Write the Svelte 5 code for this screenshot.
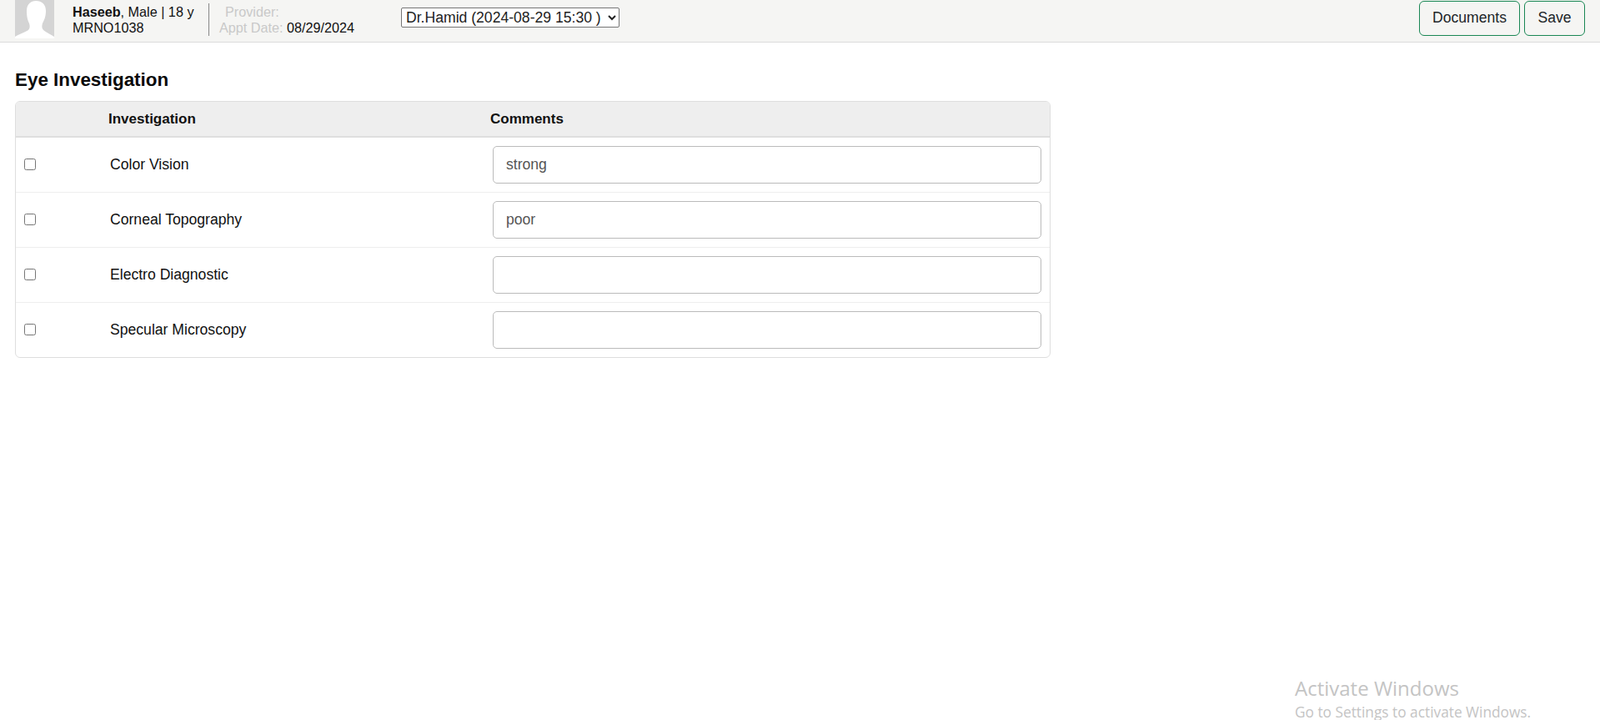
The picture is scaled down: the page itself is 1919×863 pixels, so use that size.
<script>
  const investigations = [
    { name: 'Color Vision', comment: 'strong' },
    { name: 'Corneal Topography', comment: 'poor' },
    { name: 'Electro Diagnostic', comment: '' },
    { name: 'Specular Microscopy', comment: '' }
  ];
</script>

<div class="page">
  <header class="topbar">
    <div class="avatar">
      <svg viewBox="0 0 47 46" width="47" height="46" aria-hidden="true">
        <rect width="47" height="46" fill="#d4d4d4" />
        <path d="M0 44 C4 41 12 39 16 36 C18 34 18 31 17 28 C15 24 14 20 14 13 C14 5 19 1 25 1 C32 1 37 5 37 13 C37 20 35 24 33 28 C32 31 32 34 34 36 C37 39 43 41 47 44 L47 46 L0 46 Z" fill="#fff" />
      </svg>
    </div>
    <div class="patient">
      <div><b>Haseeb</b>, Male | 18 y</div>
      <div>MRNO1038</div>
    </div>
    <div class="appt">
      <div class="provider"><span class="muted">Provider:</span></div>
      <div><span class="muted">Appt Date:</span> 08/29/2024</div>
    </div>
    <select class="visit">
      <option>Dr.Hamid (2024-08-29 15:30 )</option>
    </select>
    <div class="actions">
      <button>Documents</button>
      <button>Save</button>
    </div>
  </header>

  <main class="content">
    <h2>Eye Investigation</h2>
    <div class="card">
      <table>
        <thead>
          <tr>
            <th class="check"></th>
            <th class="name">Investigation</th>
            <th class="comments">Comments</th>
          </tr>
        </thead>
        <tbody>
          {#each investigations as item}
            <tr>
              <td class="check"><input type="checkbox" /></td>
              <td class="name">{item.name}</td>
              <td class="comments"><input type="text" value={item.comment} /></td>
            </tr>
          {/each}
        </tbody>
      </table>
    </div>
  </main>

  <div class="watermark">
    <div class="wm-title">Activate Windows</div>
    <div class="wm-sub">Go to Settings to activate Windows.</div>
  </div>
</div>

<style>
  :global(body) {
    margin: 0;
    background: #fff;
    overflow: hidden;
  }

  .page {
    position: relative;
    height: 863px;
    overflow: hidden;
    font-family: "Liberation Sans", Arial, sans-serif;
    color: #111;
  }

  .topbar {
    display: flex;
    align-items: center;
    height: 50px;
    padding: 0 18px;
    background: #f5f5f3;
    border-bottom: 1px solid #dcdcdc;
    font-size: 16.2px;
  }

  .avatar {
    width: 47px;
    height: 50px;
    flex: none;
  }

  .avatar svg {
    display: block;
  }

  .patient {
    margin-left: 22px;
    width: 163px;
    line-height: 19px;
    margin-top: -3px;
    white-space: nowrap;
  }

  .appt {
    width: 231px;
    height: 39px;
    border-left: 1px solid #888;
    padding-left: 12px;
    line-height: 19px;
    margin-top: -4px;
    box-sizing: border-box;
    white-space: nowrap;
  }

  .appt div {
    position: relative;
    top: 1px;
  }

  .provider {
    padding-left: 7px;
  }

  .muted {
    color: #c9c9c9;
  }

  .visit {
    width: 262px;
    height: 24px;
    margin-top: -9px;
    padding: 0 1px;
    font: 17.6px "Liberation Sans", Arial, sans-serif;
    color: #222;
    background: #fff;
    border: 1px solid #767676;
    border-radius: 2px;
  }

  .actions {
    margin-left: auto;
    display: flex;
    gap: 5px;
    margin-top: -7px;
  }

  .actions button {
    height: 42px;
    padding: 0;
    font: 17.6px "Liberation Sans", Arial, sans-serif;
    color: #212529;
    background: #f5f5f3;
    border: 1px solid #198754;
    border-radius: 6px;
  }

  .actions button:first-child {
    width: 121px;
  }

  .actions button:last-child {
    width: 73px;
  }

  .content {
    padding: 0 18px;
    width: 1242px;
  }

  h2 {
    margin: 32px 0 12px;
    font-size: 22.4px;
    line-height: 26px;
    font-weight: 700;
    color: #0a0a0a;
  }

  .card {
    border: 1px solid #dedede;
    border-radius: 6px;
    overflow: hidden;
    height: 306px;
  }

  table {
    width: 100%;
    border-collapse: collapse;
    table-layout: fixed;
    font-size: 17.6px;
  }

  thead tr {
    height: 42px;
    background: #eee;
    border-bottom: 2px solid #dedede;
  }

  th {
    text-align: left;
    font-weight: 700;
    font-size: 17px;
    padding: 0;
  }

  tbody tr {
    height: 66px;
    border-bottom: 1px solid #eeeeee;
  }

  tbody tr:last-child {
    border-bottom: 0;
  }

  td {
    padding: 0;
  }

  .check {
    width: 111px;
  }

  .check input {
    display: block;
    width: 14px;
    height: 14px;
    margin: -1px 0 0 10px;
  }

  .name {
    width: 458px;
  }

  td.name {
    padding-left: 2px;
  }

  td.comments {
    padding: 0 10px 0 3px;
  }

  td.comments input {
    display: block;
    box-sizing: border-box;
    width: 100%;
    height: 45px;
    padding: 0 15px;
    font: 17.6px "Liberation Sans", Arial, sans-serif;
    color: #555;
    border: 1px solid #bbb;
    border-radius: 5px;
    background: #fff;
  }

  .watermark {
    position: absolute;
    left: 1553px;
    top: 809px;
    font-family: "Open Sans", sans-serif;
    color: #c4c4c4;
    white-space: nowrap;
  }

  .wm-title {
    font-size: 24px;
    line-height: 32px;
  }

  .wm-sub {
    font-size: 17.3px;
    line-height: 22px;
    margin-top: 2px;
  }
</style>
